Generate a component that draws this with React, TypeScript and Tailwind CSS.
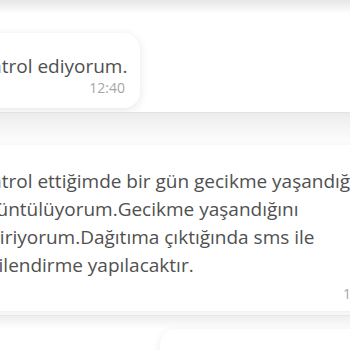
export default function App() {
  return (
    <div className="relative w-[350px] h-[350px] overflow-hidden bg-white font-['Open_Sans',sans-serif] text-[#505050]">
      {/* shadow of the message above */}
      <div className="h-[14px] bg-gradient-to-b from-[#e6e6e6] to-white" />

      {/* incoming short message */}
      <div className="mt-[19px] -ml-[54px] w-[194px] h-[75px] rounded-2xl bg-white shadow-[0_2px_10px_rgba(0,0,0,0.1)] pl-[21px] pr-[15px] pt-[21px]">
        <p className="text-[19px] leading-[24px] whitespace-nowrap">Kontrol ediyorum.</p>
        <p className="mt-[1px] text-right text-[14px] leading-[18px] text-[#a6a6a6]">12:40</p>
      </div>

      {/* separator shadow */}
      <div className="mt-[4px] h-[33px] border-t border-[#e3e3e3] bg-gradient-to-b from-[#ececec] to-white" />

      {/* long message */}
      <div className="-ml-[54px] w-[470px] h-[166px] rounded-2xl bg-white shadow-[0_2px_10px_rgba(0,0,0,0.08)] pl-[21px] pt-[22px]">
        <p className="text-[19px] leading-[28px] whitespace-nowrap">
          Kontrol ettiğimde bir gün gecikme yaşandığını
          <br />
          görüntülüyorum.Gecikme yaşandığını
          <br />
          bildiriyorum.Dağıtıma çıktığında sms ile
          <br />
          bilgilendirme yapılacaktır.
        </p>
        <p className="mt-[6px] ml-[376px] text-[14px] leading-[18px] text-[#a6a6a6]">12:41</p>
      </div>

      <div className="mt-[4px] h-[14px] border-t border-[#e6e6e6] bg-gradient-to-b from-[#eeeeee] to-white" />

      {/* next message */}
      <div className="ml-[160px] w-[230px] h-[60px] rounded-2xl bg-white shadow-[0_2px_10px_rgba(0,0,0,0.08)]" />
    </div>
  )
}
